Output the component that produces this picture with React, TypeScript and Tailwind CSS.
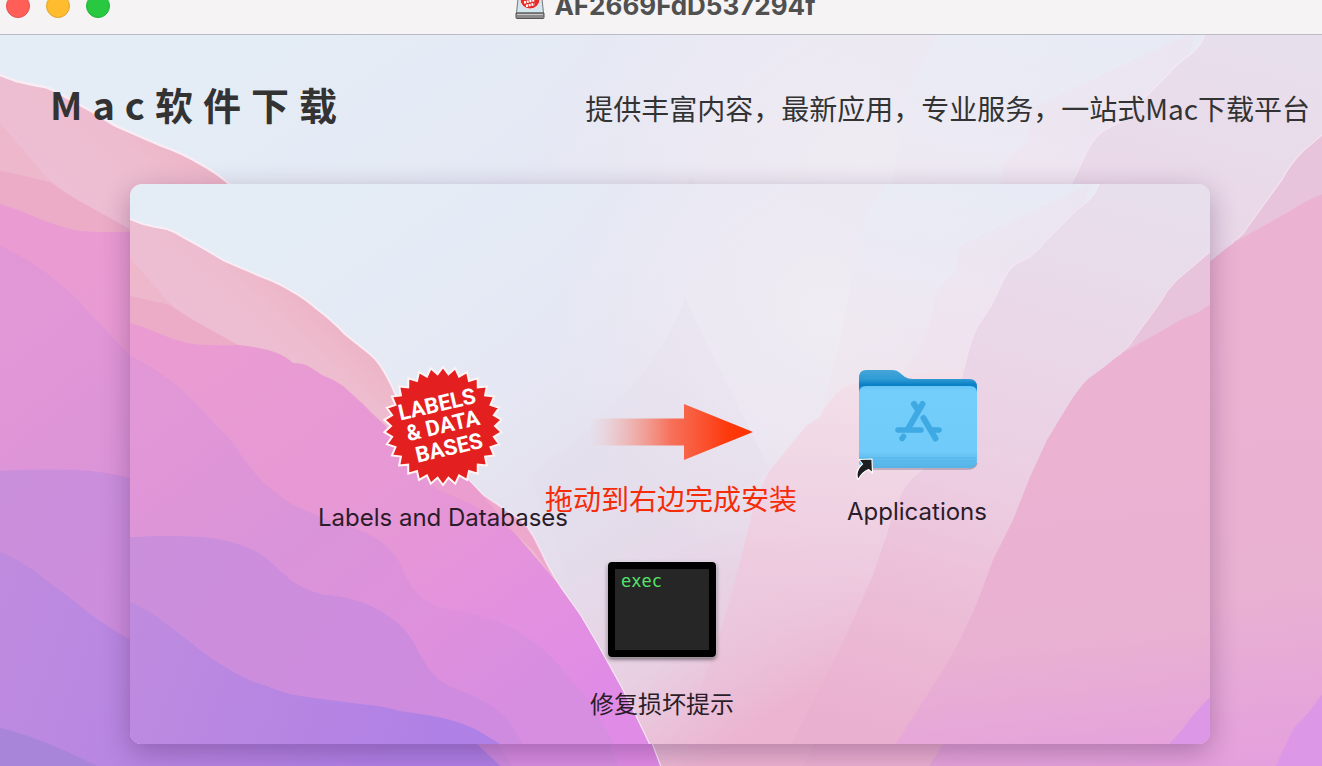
import React, { useId } from "react";

const CJK = "font-['Inter','Noto_Sans_CJK_SC',sans-serif]";

function Wallpaper({ viewBox }: { viewBox: string }) {
  const id = useId();
  const g = (name: string) => `${id}-${name}`;
  const url = (name: string) => `url(#${g(name)})`;
  const ridge =
    "M-10 32 L0 35 L13 40 Q25 43 37 45 Q46 48 53 53 Q74 64 93 76 L130 92 Q147 98 160 106 Q175 114 187 125 Q202 136 215 150 L240 170 Q246 175 250 181 Q258 193 265 209 C280 245 310 272 337 295 L353 311 L375 326 Q388 333 397 343 Q404 353 410 366 Q419 386 430 403 L450 431 L467 460 L492 505 L505 531 L519 560 L534 600 L-10 600 Z";
  return (
    <svg
      className="absolute inset-0 h-full w-full"
      viewBox={viewBox}
      preserveAspectRatio="none"
      aria-hidden="true"
    >
      <defs>
        <linearGradient id={g("sky")} x1="150" y1="0" x2="560" y2="590" gradientUnits="userSpaceOnUse">
          <stop offset="0" stopColor="#e4edf6" />
          <stop offset="0.4" stopColor="#e5e8f4" />
          <stop offset="0.68" stopColor="#e5dceb" />
          <stop offset="0.85" stopColor="#e8cfe2" />
          <stop offset="1" stopColor="#ecb4d1" />
        </linearGradient>
        <radialGradient id={g("glow")} cx="700" cy="130" r="280" gradientUnits="userSpaceOnUse">
          <stop offset="0" stopColor="#efecf3" />
          <stop offset="0.5" stopColor="#eeeaf3" stopOpacity="0.75" />
          <stop offset="1" stopColor="#ebe6f1" stopOpacity="0" />
        </radialGradient>
        <linearGradient id={g("topRight")} x1="850" y1="0" x2="800" y2="230" gradientUnits="userSpaceOnUse">
          <stop offset="0" stopColor="#e8edf6" />
          <stop offset="0.45" stopColor="#eceaf4" />
          <stop offset="1" stopColor="#f2e0ea" stopOpacity="0.4" />
        </linearGradient>
        <linearGradient id={g("dune")} x1="700" y1="200" x2="680" y2="560" gradientUnits="userSpaceOnUse">
          <stop offset="0" stopColor="#f2dfe8" />
          <stop offset="0.35" stopColor="#efd2e3" />
          <stop offset="0.7" stopColor="#ecc2d9" />
          <stop offset="1" stopColor="#ebb2d0" />
        </linearGradient>
        <linearGradient id={g("duneFade")} x1="0" y1="380" x2="0" y2="540" gradientUnits="userSpaceOnUse">
          <stop offset="0" stopColor="#fff" />
          <stop offset="1" stopColor="#fff" stopOpacity="0" />
        </linearGradient>
        <mask id={g("duneMask")}>
          <rect width="1080" height="600" fill={url("duneFade")} />
        </mask>
        <linearGradient id={g("rim")} x1="0" y1="0" x2="0" y2="420" gradientUnits="userSpaceOnUse">
          <stop offset="0" stopColor="#f5eaf3" />
          <stop offset="0.5" stopColor="#f5e2ee" stopOpacity="0.7" />
          <stop offset="1" stopColor="#f3d3e3" stopOpacity="0" />
        </linearGradient>
        <linearGradient id={g("r1")} x1="950" y1="0" x2="800" y2="560" gradientUnits="userSpaceOnUse">
          <stop offset="0" stopColor="#e8dfec" />
          <stop offset="0.35" stopColor="#ead5e7" />
          <stop offset="0.55" stopColor="#eccde1" />
          <stop offset="0.75" stopColor="#ecbed7" />
          <stop offset="1" stopColor="#eab0d0" />
        </linearGradient>
        <linearGradient id={g("r3")} x1="950" y1="130" x2="1000" y2="590" gradientUnits="userSpaceOnUse">
          <stop offset="0" stopColor="#ecb2d1" />
          <stop offset="0.7" stopColor="#e9b1d2" />
          <stop offset="1" stopColor="#e4a0dd" />
        </linearGradient>
        <linearGradient id={g("pink")} x1="100" y1="190" x2="190" y2="90" gradientUnits="userSpaceOnUse">
          <stop offset="0" stopColor="#edbed5" />
          <stop offset="0.5" stopColor="#edbdcf" />
          <stop offset="1" stopColor="#edb0c2" />
        </linearGradient>
        <linearGradient id={g("magenta")} x1="100" y1="160" x2="380" y2="560" gradientUnits="userSpaceOnUse">
          <stop offset="0" stopColor="#e99bd2" />
          <stop offset="0.5" stopColor="#e697d6" />
          <stop offset="1" stopColor="#e08ce6" />
        </linearGradient>
        <linearGradient id={g("orchid")} x1="60" y1="210" x2="330" y2="560" gradientUnits="userSpaceOnUse">
          <stop offset="0" stopColor="#e196d7" />
          <stop offset="0.4" stopColor="#d893d9" />
          <stop offset="0.75" stopColor="#de90dc" />
          <stop offset="1" stopColor="#d68de0" />
        </linearGradient>
        <linearGradient id={g("violet")} x1="0" y1="350" x2="300" y2="560" gradientUnits="userSpaceOnUse">
          <stop offset="0" stopColor="#ca8fdb" />
          <stop offset="1" stopColor="#cf8bdf" />
        </linearGradient>
        <linearGradient id={g("purple")} x1="0" y1="440" x2="330" y2="560" gradientUnits="userSpaceOnUse">
          <stop offset="0" stopColor="#be8bdf" />
          <stop offset="1" stopColor="#af80e6" />
        </linearGradient>
        <clipPath id={g("clip")}>
          <path d={ridge} />
        </clipPath>
      </defs>

      <rect width="1080" height="600" fill={url("sky")} />
      <rect width="1080" height="600" fill={url("glow")} />
      <path d="M760 -5 Q730 35 727 60 Q722 95 715 130 Q708 170 690 233 L850 200 L990 -5 Z" fill={url("topRight")} opacity="0.8" />
      <path d="M555 115 Q520 210 400 290 L440 400 Q560 340 640 286 Q596 200 555 115 Z" fill="#e2dbea" opacity="0.22" />
      <path d="M829 62 L825 89 Q808 100 805 113 Q804 130 795 152 Q785 178 765 196 L900 230 L960 0 Z" fill="#f1dfeb" opacity="0.3" />
      <g mask={url("duneMask")}>
        <path d="M850 185 Q780 190 727 199 Q712 203 707 209 Q696 220 690 233 Q682 238 677 241 L640 286 Q633 298 630 308 Q622 325 620 338 L603 405 L590 449 Q570 510 540 590 L1000 590 L900 185 Z" fill={url("dune")} />
      </g>
      <path d="M970 -5 Q967 10 957 18 Q945 26 937 36 L917 56 Q908 67 900 73 Q884 80 880 86 Q875 92 872 99 Q866 113 860 124 L847 144 Q842 154 838 169 L832 193 Q822 250 797 283 Q780 293 773 306 Q763 325 757 349 L742 393 L720 443 L703 479 L640 600 L1090 600 L1090 -5 Z" fill={url("r1")} stroke={url("rim")} strokeWidth="1" />
      <path d="M1090 58 L1080 68 L1047 96 Q1036 107 1030 119 L1003 156 Q999 164 990 169 L1000 200 L1090 200 Z" fill="#e7c3dc" stroke={url("rim")} strokeWidth="1" />
      <path d="M1090 114 L1067 129 Q1050 135 1037 144 L1003 163 Q988 171 977 181 L958 195 Q947 206 937 223 L917 256 L900 293 L883 336 L863 376 L847 419 L830 456 L813 486 L740 600 L1090 600 Z" fill={url("r3")} />
      <path d="M1080 513 Q1063 530 1052 546 L1039 560 L1020 600 L1090 600 L1090 500 Z" fill="#dc98e7" />

      <path d={ridge} fill={url("pink")} stroke="#f8edf5" strokeWidth="2" />
      <g clipPath={url("clip")}>
        <path d="M-10 62 L0 74 Q20 96 37 117 Q50 128 70 140 L108 161 L-10 161 Z" fill="#eeb6c8" opacity="0.75" />
        <path d="M-10 111 L0 112 Q20 116 40 121 Q50 129 70 140 L108 161 L-10 170 Z" fill="#eba6c6" opacity="0.7" />
        <path d="M-10 136 L0 139 Q15 143 30 150 Q42 155 57 159 Q70 162 108 161 Q130 163 147 169 Q155 172 163 179 Q173 179 180 183 L192 191 Q203 195 213 202 L233 220 Q244 232 255 241 C275 272 315 285 340 297 L600 600 L-10 600 Z" fill={url("magenta")} />
        <path d="M262 246 Q285 296 317 310 Q365 327 403 367 L430 403 L460 380 L370 280 L300 240 Z" fill="#eda0cc" opacity="0.7" />
        <path d="M-10 168 L0 172 Q18 180 37 194 Q55 207 70 224 L103 259 Q118 282 130 295 Q141 306 153 314 Q163 322 177 327 Q195 336 220 343 Q237 348 250 357 Q261 364 270 379 Q278 401 290 412 Q303 425 335 428 Q400 440 440 495 Q475 530 500 600 L-10 600 Z" fill={url("orchid")} opacity="0.9" />
        <path d="M-10 354 L0 353 Q60 350 87 355 Q101 357 113 362 Q125 366 137 375 L163 398 Q177 406 190 410 Q215 412 237 420 Q255 428 270 441 Q278 449 283 457 Q291 474 300 486 Q308 496 317 501 L343 512 Q362 520 377 535 L393 560 L418 600 L-10 600 Z" fill={url("violet")} />
        <path d="M-10 413 L0 418 Q14 424 27 433 L60 458 Q79 474 97 484 Q115 496 137 502 Q152 509 170 512 L230 520 Q255 522 270 527 Q300 531 317 535 Q335 540 347 546 L370 560 L402 590 L410 600 L-10 600 Z" fill={url("purple")} />
        <path d="M0 559 Q40 570 78 590 L0 590 Z" fill="#a985da" />
      </g>
    </svg>
  );
}

const BADGE_POINTS = Array.from({ length: 60 }, (_, i) => {
  const r = i % 2 === 0 ? 59 : 52;
  const a = (i * Math.PI) / 30 - Math.PI / 2;
  return `${(60 + r * Math.cos(a)).toFixed(2)},${(60 + r * Math.sin(a)).toFixed(2)}`;
}).join(" ");

function LabelsBadge() {
  return (
    <svg className="size-[120px]" viewBox="0 0 120 120" aria-hidden="true">
      <polygon points={BADGE_POINTS} fill="#e3201f" stroke="#fff4f4" strokeWidth="2" strokeLinejoin="miter" />
      <g
        transform="rotate(-13 60 60)"
        fill="#fff"
        textAnchor="middle"
        fontFamily="Roboto, sans-serif"
        fontWeight="700"
        fontSize="22"
      >
        <text x="59" y="45">LABELS</text>
        <text x="60" y="67">&amp; DATA</text>
        <text x="61" y="90">BASES</text>
      </g>
    </svg>
  );
}

function ApplicationsFolder() {
  const id = useId();
  return (
    <svg className="h-[120px] w-[124px]" viewBox="0 0 124 120" aria-hidden="true">
      <defs>
        <linearGradient id={`${id}-back`} x1="0" y1="0" x2="0" y2="1">
          <stop offset="0" stopColor="#45a5d8" />
          <stop offset="0.3" stopColor="#2f9bd4" />
          <stop offset="0.5" stopColor="#0a7fc5" />
          <stop offset="1" stopColor="#2f9fdb" />
        </linearGradient>
        <linearGradient id={`${id}-front`} x1="0" y1="0" x2="0" y2="1">
          <stop offset="0" stopColor="#66c4f6" />
          <stop offset="0.06" stopColor="#74cefb" />
          <stop offset="0.8" stopColor="#70cbfa" />
          <stop offset="0.86" stopColor="#66c2f3" />
          <stop offset="1" stopColor="#54b2e6" />
        </linearGradient>
      </defs>
      <path d="M4 18 Q4 10 11 10 H37 Q42 10 45 13 L50 17 Q53 19 58 19 H114 Q122 19 122 27 V40 H4 Z" fill={`url(#${id}-back)`} />
      <path d="M6 108 Q8 109 12 109 H113 Q120 109 122 103" fill="none" stroke="#79677f" strokeOpacity="0.5" strokeWidth="1.500" />
      <path d="M4 33 Q4 26 11 26 H115 Q122 26 122 33 V101 Q122 108 115 108 H11 Q4 108 4 101 Z" fill={`url(#${id}-front)`} />
      <path d="M5 98 H121 M5 101 H121" stroke="#55b4e8" strokeWidth="1" />
      <g stroke="#3fa9e4" strokeLinecap="round" fill="none" strokeWidth="6">
        <path d="M67.500 44 L53.500 68" />
        <path d="M59 44 L63 50" />
        <path d="M43 70 H66" strokeWidth="5.500" />
        <path d="M47 78.500 L48.500 76.500" strokeWidth="5.500" />
        <path d="M68.500 58 L80.500 78.500" />
        <path d="M78 70 H84" strokeWidth="5.500" />
      </g>
      <path
        d="M4 99.500 L17 99 L17.500 113 L13.500 109.500 Q7 112 3 120 Q-0.500 111 7.500 104 Z"
        fill="#1e1e20"
        stroke="#fff"
        strokeWidth="1.200"
        strokeLinejoin="round"
      />
    </svg>
  );
}

function DragArrow() {
  const id = useId();
  return (
    <svg className="h-14 w-[164px]" viewBox="0 0 164 56" aria-hidden="true">
      <defs>
        <linearGradient id={id} x1="0" x2="1">
          <stop offset="0" stopColor="#f68a78" stopOpacity="0" />
          <stop offset="0.08" stopColor="#f68a78" stopOpacity="0.1" />
          <stop offset="0.5" stopColor="#f8644a" stopOpacity="0.9" />
          <stop offset="0.85" stopColor="#fd380b" />
          <stop offset="1" stopColor="#ff3200" />
        </linearGradient>
      </defs>
      <path d="M0 14.500 H95 V0 L164 28 L95 56 V41.500 H0 Z" fill={`url(#${id})`} />
    </svg>
  );
}

function DiskIcon() {
  return (
    <svg className="h-9 w-8" viewBox="0 0 32 36" aria-hidden="true">
      <path d="M5 1 H27 L29.500 25 H2.500 Z" fill="#d3e6ef" stroke="#777" strokeWidth="1" />
      <path d="M2 25 H30 V29.500 Q30 30.500 29 30.500 H3 Q2 30.500 2 29.500 Z" fill="#8b8b8b" stroke="#555" strokeWidth="1" />
      <path d="M3 26.500 H29" stroke="#c9c9c9" strokeWidth="1" />
      <circle cx="16" cy="11" r="10" fill="#e52a27" stroke="#f6d9d9" strokeWidth="1" />
      <path d="M10 14.500 L21 12 M12 18 L20.500 16" stroke="#fff" strokeWidth="2.500" strokeDasharray="2 0.800" />
    </svg>
  );
}

function TitleBar() {
  return (
    <header className="relative -mt-[23px] flex h-[58px] items-center justify-center border-b border-[#b9bcc6] bg-[#f5f3f4] pl-2">
      <div className="absolute left-1.5 flex gap-4">
        <button aria-label="关闭" className="size-6 rounded-full border border-[#e2514b] bg-[#ff5f57]" />
        <button aria-label="最小化" className="size-6 rounded-full border border-[#e0a433] bg-[#febc2e]" />
        <button aria-label="缩放" className="size-6 rounded-full border border-[#24b238] bg-[#28c840]" />
      </div>
      <div className="flex items-center gap-2">
        <DiskIcon />
        <span className="font-['Inter',sans-serif] text-[26px] font-bold leading-8 text-[#505050]">AF2669FdD537294f</span>
      </div>
    </header>
  );
}

export default function App() {
  return (
    <div className={`flex min-h-screen flex-col overflow-hidden bg-[#e5e8f3] ${CJK}`}>
      <TitleBar />
      <main className="relative flex-1 pb-[22px]">
        <Wallpaper viewBox="0 3 1062 587" />
        <div className="relative flex h-[149px] items-center pb-2">
          <div className="flex w-full items-baseline justify-between pl-[50px] pr-3 font-['Noto_Sans_CJK_SC',sans-serif] text-[#333333]">
            <h1 className="whitespace-nowrap text-[38px] font-bold leading-10 tracking-[10px]">Mac软件下载</h1>
            <p className="whitespace-nowrap text-[28px] leading-10">提供丰富内容，最新应用，专业服务，一站式Mac下载平台</p>
          </div>
        </div>

        <section className="relative ml-[130px] mr-28 min-h-[560px] rounded-xl shadow-[0_8px_28px_rgba(60,20,70,0.32)]">
          <div className="absolute inset-0 overflow-hidden rounded-xl">
            <Wallpaper viewBox="0 0 1080 560" />
          </div>

          <div className="relative pt-44 text-[24px] leading-8 text-[#2b1c29]">
            <div className="grid grid-cols-[204px_252px_240px] justify-center pl-[38px]">
              <button className="flex flex-col items-center gap-4 pt-1.5">
                <LabelsBadge />
                <span className="whitespace-nowrap">Labels and Databases</span>
              </button>
              <div className="flex flex-col items-center gap-[18px] pt-11">
                <DragArrow />
                <p className="whitespace-nowrap font-['Noto_Sans_CJK_SC',sans-serif] text-[28px] leading-10 text-[#f52c08]">拖动到右边完成安装</p>
              </div>
              <button className="flex flex-col items-center gap-4 self-start">
                <ApplicationsFolder />
                <span>Applications</span>
              </button>
            </div>

            <div className="mt-7 flex justify-center pr-4">
              <button className="flex flex-col items-center gap-[30px]">
                <span className="flex h-[95px] w-[108px] rounded border-[7px] border-black bg-[#262626] pl-1.5 text-left font-['DejaVu_Sans_Mono',monospace] text-[17px] leading-6 text-[#54e36a] shadow-[0_0_2px_rgba(255,255,255,0.9),0_2px_4px_rgba(0,0,0,0.6)]">
                  exec
                </span>
                <span className="font-['Noto_Sans_CJK_SC',sans-serif]">修复损坏提示</span>
              </button>
            </div>
          </div>
        </section>
      </main>
    </div>
  );
}
